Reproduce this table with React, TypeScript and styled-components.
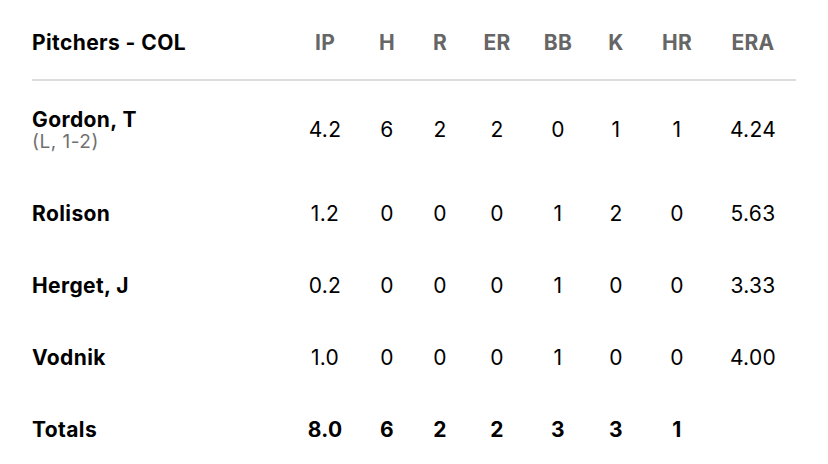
import React from 'react';
import styled, { createGlobalStyle } from 'styled-components';

const GlobalStyle = createGlobalStyle`
  html, body {
    margin: 0;
    padding: 0;
    background: #fff;
  }
  body {
    font-family: Inter, "Open Sans", "Liberation Sans", sans-serif;
    color: #000;
  }
`;

// column widths chosen so each stat is centred where the reference puts it
const COLS = '262px 62px 62px 44px 70px 52px 64px 58px 94px';

const Table = styled.div`
  width: 764px;
  margin-left: 32px;
`;

const HeaderRow = styled.div`
  display: grid;
  grid-template-columns: ${COLS};
  align-items: center;
  padding: 31px 0 24px;
  border-bottom: 2px solid #dcdcdc;
`;

const HeadTitle = styled.div`
  font-size: 21px;
  line-height: 24px;
  font-weight: 700;
  color: #000;
  letter-spacing: 0.4px;
`;

const HeadCell = styled.div`
  font-size: 21px;
  line-height: 24px;
  font-weight: 700;
  color: #666;
  text-align: center;
  letter-spacing: 0.3px;
`;

const Row = styled.div<{ $tall?: boolean }>`
  display: grid;
  grid-template-columns: ${COLS};
  align-items: center;
  box-sizing: border-box;
  padding-top: 2px;
  height: ${(p) => (p.$tall ? 96 : 72)}px;
`;

const NameCell = styled.div`
  display: flex;
  flex-direction: column;
`;

const Name = styled.span`
  font-size: 21px;
  line-height: 24px;
  font-weight: 700;
  letter-spacing: 0.4px;
`;

const Decision = styled.span`
  font-size: 19px;
  line-height: 20px;
  color: #707070;
  letter-spacing: 0.5px;
`;

const Cell = styled.div<{ $bold?: boolean }>`
  font-size: 21px;
  line-height: 24px;
  font-weight: ${(p) => (p.$bold ? 700 : 400)};
  text-align: center;
  letter-spacing: 0.3px;
`;

const headers = ['IP', 'H', 'R', 'ER', 'BB', 'K', 'HR', 'ERA'];

const pitchers = [
  { name: 'Gordon, T', dec: '(L, 1-2)', stats: ['4.2', '6', '2', '2', '0', '1', '1', '4.24'] },
  { name: 'Rolison', stats: ['1.2', '0', '0', '0', '1', '2', '0', '5.63'] },
  { name: 'Herget, J', stats: ['0.2', '0', '0', '0', '1', '0', '0', '3.33'] },
  { name: 'Vodnik', stats: ['1.0', '0', '0', '0', '1', '0', '0', '4.00'] },
];

const totals = ['8.0', '6', '2', '2', '3', '3', '1', ''];

export default function App() {
  return (
    <>
      <GlobalStyle />
      <Table>
        <HeaderRow>
          <HeadTitle>Pitchers - COL</HeadTitle>
          {headers.map((h) => (
            <HeadCell key={h}>{h}</HeadCell>
          ))}
        </HeaderRow>
        {pitchers.map((p) => (
          <Row key={p.name} $tall={!!p.dec}>
            <NameCell>
              <Name>{p.name}</Name>
              {p.dec && <Decision>{p.dec}</Decision>}
            </NameCell>
            {p.stats.map((s, i) => (
              <Cell key={i}>{s}</Cell>
            ))}
          </Row>
        ))}
        <Row>
          <NameCell>
            <Name>Totals</Name>
          </NameCell>
          {totals.map((s, i) => (
            <Cell key={i} $bold>
              {s}
            </Cell>
          ))}
        </Row>
      </Table>
    </>
  );
}
